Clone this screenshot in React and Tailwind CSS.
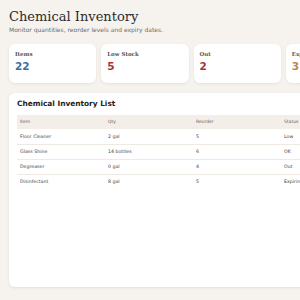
const stats = [
  { label: "Items", value: "22", tone: "text-[#3b6ea5]" },
  { label: "Low Stock", value: "5", tone: "text-[#a8343a]" },
  { label: "Out", value: "2", tone: "text-[#a8343a]" },
  { label: "Expiring", value: "3", tone: "text-[#b58a4a]" },
];

const rows = [
  { item: "Floor Cleaner", qty: "2 gal", reorder: "5", status: "Low" },
  { item: "Glass Shine", qty: "14 bottles", reorder: "6", status: "OK" },
  { item: "Degreaser", qty: "0 gal", reorder: "4", status: "Out" },
  { item: "Disinfectant", qty: "8 gal", reorder: "5", status: "Expiring" },
];

export default function App() {
  return (
    <div className="h-[300px] w-[300px] overflow-hidden bg-[#f6f3ee]">
      <div className="w-[373px] pl-[9px] pt-[9px]">
        <h1 className="text-[13px] leading-[16px] text-[#2a2a2a] [font-family:'DejaVu_Serif',serif]">
          Chemical Inventory
        </h1>
        <p className="mt-[1px] text-[6px] leading-[8px] text-[#6b6b6b] [font-family:'DejaVu_Sans',sans-serif]">
          Monitor quantities, reorder levels and expiry dates.
        </p>

        <div className="mt-[10px] grid grid-cols-4 gap-[5px]">
          {stats.map((s) => (
            <div
              key={s.label}
              className="h-[39px] rounded-[6px] bg-white px-[6px] pt-[7px] shadow-[0_1px_3px_rgba(120,100,70,0.12)]"
            >
              <div className="text-[5.5px] font-bold leading-[7px] text-[#555] [font-family:'DejaVu_Serif',serif]">
                {s.label}
              </div>
              <div className={`mt-[2px] text-[10.5px] font-bold leading-[13px] [font-family:'DejaVu_Sans',sans-serif] ${s.tone}`}>
                {s.value}
              </div>
            </div>
          ))}
        </div>

        <div className="mt-[10px] h-[194px] rounded-[6px] bg-white px-[8px] pt-[6px] shadow-[0_1px_3px_rgba(120,100,70,0.14)] [font-family:'DejaVu_Sans',sans-serif]">
          <h2 className="text-[7.4px] font-bold leading-[9px] text-[#222]">Chemical Inventory List</h2>
          <table className="mt-[7px] w-[352px] border-collapse text-left">
            <thead>
              <tr className="h-[14px] bg-[#f3efe8]">
                {["Item", "Qty", "Reorder", "Status"].map((h) => (
                  <th key={h} className="w-[88px] px-[3px] text-[4.5px] font-normal text-[#6b6257]">
                    {h}
                  </th>
                ))}
              </tr>
            </thead>
            <tbody>
              {rows.map((r) => (
                <tr key={r.item} className="h-[15px] border-b border-[#eeeae3] last:border-b-0">
                  <td className="px-[3px] text-[4.7px] text-[#444]">{r.item}</td>
                  <td className="px-[3px] text-[4.7px] text-[#444]">{r.qty}</td>
                  <td className="px-[3px] text-[4.7px] text-[#444]">{r.reorder}</td>
                  <td className="px-[3px] text-[4.7px] text-[#444]">{r.status}</td>
                </tr>
              ))}
            </tbody>
          </table>
        </div>
      </div>
    </div>
  );
}
